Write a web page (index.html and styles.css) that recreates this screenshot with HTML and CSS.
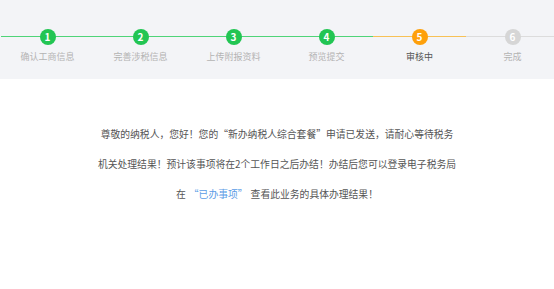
FILE: index.html
```html
<!DOCTYPE html>
<html lang="zh-CN">
<head>
    <meta charset="UTF-8">
    <title>审核中</title>
    <link rel="stylesheet" href="styles.css">
</head>
<body>
    <div class="steps">
        <div class="step done"><span class="num">1</span><span class="label">确认工商信息</span></div>
        <div class="step done"><span class="num">2</span><span class="label">完善涉税信息</span></div>
        <div class="step done"><span class="num">3</span><span class="label">上传附报资料</span></div>
        <div class="step done"><span class="num">4</span><span class="label">预览提交</span></div>
        <div class="step active"><span class="num">5</span><span class="label">审核中</span></div>
        <div class="step"><span class="num">6</span><span class="label">完成</span></div>
    </div>

    <div class="message">
        <p>尊敬的纳税人，您好！您的“新办纳税人综合套餐”申请已发送，请耐心等待税务<br>机关处理结果！预计该事项将在2个工作日之后办结！办结后您可以登录电子税务局<br>在<span class="link">“已办事项”</span>查看此业务的具体办理结果！</p>
    </div>
</body>
</html>
```

FILE: styles.css
```css
body {
 margin: 0;
 background: #fff;
 font-family: "Noto Sans CJK SC", "Noto Sans", sans-serif;
}

.steps {
 display: flex;
 overflow: hidden;
 background-color: #f3f4f7;
 height: 79px;
 padding: 29px 0 0 1px;
 box-sizing: border-box;
}

.step {
 flex: 0 0 93px;
 position: relative;
 display: flex;
 flex-direction: column;
 align-items: center;
}

/* connecting line, one half on each side of the circle */
.step::before,
.step::after {
 content: "";
 position: absolute;
 top: 7px;
 height: 1px;
 width: 50%;
 background-color: #dcdcdc;
}
.step::before { left: 0; }
.step::after { right: 0; }

.step.done::before,
.step.done::after { background-color: #4fd478; }
.step.active::before,
.step.active::after { background-color: #f7c156; }

.num {
 position: relative;
 z-index: 1;
 width: 16px;
 height: 16px;
 border-radius: 50%;
 background-color: #d6d6d6;
 color: #fff;
 font-size: 10px;
 font-weight: bold;
 line-height: 16px;
 text-align: center;
}
.done .num { background-color: #22c553; }
.active .num { background-color: #fea00b; }

.label {
 margin-top: 5px;
 font-size: 9px;
 color: #b3b3b3;
}
.active .label { color: #555; }

.message {
 padding-top: 40px;
 text-align: center;
}

.message p {
 margin: 0;
 font-size: 9.8px;
 line-height: 30px;
 color: #555;
}

.message .link {
 color: #5b9ce6;
 margin: 0 3px;
}
```
